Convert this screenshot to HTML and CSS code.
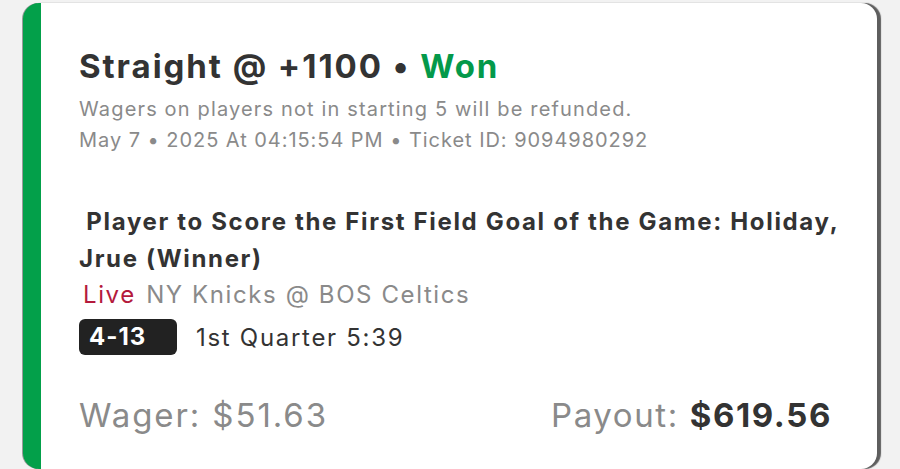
FILE: index.html
```html
<!DOCTYPE html>
<html>
<head>
<meta charset="utf-8">
<link rel="stylesheet" href="styles.css">
</head>
<body>
<div class="page">
  <div class="card">
    <div class="head">
      <h1 class="title">Straight @ +1100 <span class="dot">•</span> <span class="won">Won</span></h1>
      <p class="sub first">Wagers on players not in starting 5 will be refunded.</p>
      <p class="sub">May 7 • 2025 At 04:15:54 PM • Ticket ID: 9094980292</p>
    </div>
    <div class="leg">
      <h2 class="market">&nbsp;Player to Score the First Field Goal of the Game: Holiday, Jrue (Winner)</h2>
      <div class="event"><span class="live">Live</span> <span class="teams">NY Knicks @ BOS Celtics</span></div>
      <div class="score-row"><span class="score">4-13</span><span class="clock">1st Quarter 5:39</span></div>
    </div>
    <div class="totals">
      <div class="wager">Wager: $51.63</div>
      <div class="payout">Payout: <b>$619.56</b></div>
    </div>
  </div>
</div>
</body>
</html>
```
FILE: styles.css
```css
html, body {
  margin: 0;
  padding: 0;
  background: #f2f2f2;
  width: 900px;
  height: 469px;
  overflow: hidden;
}
.page {
  padding: 3px 0 0 23px;
}
.card {
  width: 854px;
  height: 466px;
  box-sizing: border-box;
  background: #fff;
  border-left: 18px solid #03a04a;
  border-radius: 16px;
  box-shadow: 4px 0 1px #5e5e5e, -1px 0 0 #9a9a9a;
  padding: 43px 45px 0 38px;
  font-family: Inter, "Noto Sans", sans-serif;
  color: #333;
  display: flex;
  flex-direction: column;
}
.title {
  margin: 0;
  font-size: 33px;
  font-weight: 700;
  line-height: 40px;
  letter-spacing: 1.95px;
}
.won { color: #04994a; }
.sub {
  margin: 0;
  font-size: 20px;
  line-height: 31px;
  color: #8a8a8a;
  letter-spacing: 0.95px;
}
.sub.first {
  margin-top: 8px;
  letter-spacing: 1.15px;
}
.leg {
  margin-top: 47px;
}
.market {
  margin: 0 -40px 0 0;
  font-size: 24px;
  font-weight: 700;
  line-height: 37px;
  letter-spacing: 1.66px;
}
.event {
  font-size: 24px;
  line-height: 36px;
  color: #8a8a8a;
  padding-left: 4px;
  letter-spacing: 1.6px;
}
.live { color: #b41a3c; margin-right: 2px; }
.score-row {
  display: flex;
  align-items: center;
  gap: 19px;
  margin-top: 6px;
}
.score {
  display: inline-block;
  width: 98px;
  height: 36px;
  box-sizing: border-box;
  padding-left: 10px;
  background: #222;
  color: #fff;
  border-radius: 6px;
  font-size: 24px;
  font-weight: 700;
  line-height: 36px;
  letter-spacing: 1px;
}
.clock {
  font-size: 24px;
  color: #333;
  letter-spacing: 1.7px;
}
.totals {
  margin-top: 40px;
  display: flex;
  justify-content: space-between;
  align-items: baseline;
  font-size: 33px;
  line-height: 40px;
  color: #8a8a8a;
  letter-spacing: 1.6px;
}
.wager { letter-spacing: 1.9px; }
.payout b { color: #333; font-weight: 700; }
```
